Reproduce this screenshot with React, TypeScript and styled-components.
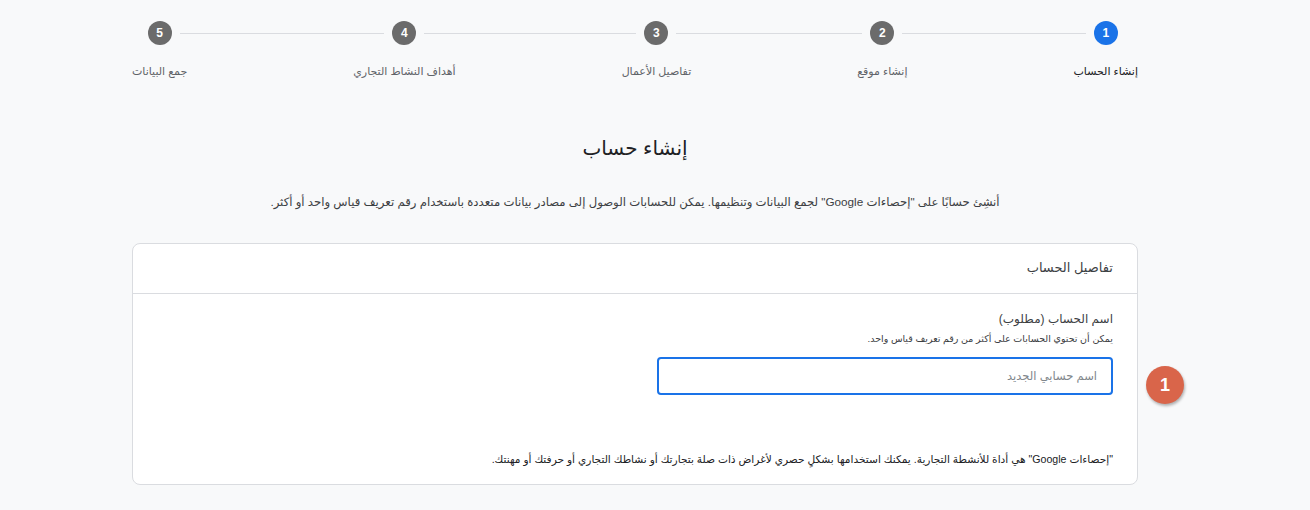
import { createGlobalStyle } from "styled-components";
import styled from "styled-components";

const GlobalStyle = createGlobalStyle`
  html, body {
    margin: 0;
    padding: 0;
    background: #f8f9fa;
  }

  body {
    font-family: "Liberation Sans", Arial, "DejaVu Sans", sans-serif;
    color: #202124;
  }
`;

const Page = styled.div`
  direction: rtl;
  min-height: 510px;
  padding: 21px 172px 0 132px;
  box-sizing: border-box;
  position: relative;
`;

const Stepper = styled.div`
  display: flex;
  align-items: flex-start;
`;

const Step = styled.div`
  display: flex;
  flex-direction: column;
  align-items: stretch;
`;

const StepTop = styled.div`
  display: flex;
  align-items: center;
  height: 24px;
`;

interface LineProps {
  $blank?: boolean;
}

const StepLine = styled.span<LineProps>`
  flex: 1;
  height: 1px;
  background: ${({ $blank }) => ($blank ? "transparent" : "#dadce0")};
`;

interface CircleProps {
  $active: boolean;
}

const StepCircle = styled.span<CircleProps>`
  width: 24px;
  height: 24px;
  margin: 0 8px;
  border-radius: 50%;
  flex-shrink: 0;
  display: flex;
  align-items: center;
  justify-content: center;
  background: ${({ $active }) => ($active ? "#1a73e8" : "#6b6b6b")};
  color: #fff;
  font-size: 12px;
  font-weight: 700;
`;

const StepLabel = styled.span<CircleProps>`
  margin-top: 18px;
  font-size: 11px;
  line-height: 16px;
  white-space: nowrap;
  text-align: center;
  color: ${({ $active }) => ($active ? "#202124" : "#5f6368")};
`;

const Connector = styled.span`
  flex: 1;
  height: 1px;
  margin-top: 12px;
  background: #dadce0;
`;

const Title = styled.h1`
  margin: 55px 0 0;
  text-align: center;
  font-size: 20px;
  font-weight: 400;
  line-height: 28px;
  color: #202124;
`;

const Description = styled.p`
  margin: 31px 0 0;
  text-align: center;
  font-size: 11.7px;
  line-height: 18px;
  color: #3c4043;
`;

const Card = styled.section`
  margin-top: 32px;
  background: #fff;
  border: 1px solid #dadce0;
  border-radius: 8px;
`;

const CardHeader = styled.div`
  height: 50px;
  padding: 0 24px 3px;
  box-sizing: border-box;
  display: flex;
  align-items: center;
  border-bottom: 1px solid #dadce0;
  font-size: 13px;
  color: #3c4043;
`;

const CardBody = styled.div`
  padding: 17px 24px 17px;
`;

const FieldLabel = styled.div`
  font-size: 12px;
  line-height: 16px;
  color: #3c4043;
`;

const FieldHint = styled.div`
  margin-top: 5px;
  font-size: 9.5px;
  line-height: 14px;
  color: #3c4043;
`;

const Input = styled.input`
  display: block;
  margin-top: 11px;
  width: 456px;
  height: 38px;
  box-sizing: border-box;
  padding: 0 14px;
  border: 2px solid #1a73e8;
  border-radius: 4px;
  font-family: inherit;
  font-size: 11.5px;
  color: #202124;
  outline: none;
  direction: rtl;

  &::placeholder {
    color: #80868b;
  }
`;

const Footnote = styled.p`
  margin: 56px 0 0;
  font-size: 10.6px;
  line-height: 16px;
  color: #202124;
`;

const Badge = styled.span`
  position: absolute;
  top: 366px;
  left: 1146px;
  width: 38px;
  height: 38px;
  border-radius: 50%;
  background: #d9654a;
  color: #fff;
  font-size: 18px;
  font-weight: 700;
  display: flex;
  align-items: center;
  justify-content: center;
  box-shadow: 1px 2px 3px rgba(0, 0, 0, 0.3);
`;

const steps = [
  "إنشاء الحساب",
  "إنشاء موقع",
  "تفاصيل الأعمال",
  "أهداف النشاط التجاري",
  "جمع البيانات",
];

export default function App() {
  return (
    <>
      <GlobalStyle />
      <Page>
        <Stepper>
          {steps.map((label, i) => (
            <StepGroup key={label} index={i} label={label} last={i === steps.length - 1} />
          ))}
        </Stepper>

        <Title>إنشاء حساب</Title>
        <Description>
          أنشِئ حسابًا على "إحصاءات Google" لجمع البيانات وتنظيمها. يمكن للحسابات الوصول إلى مصادر بيانات متعددة باستخدام رقم تعريف قياس واحد أو أكثر.
        </Description>

        <Card>
          <CardHeader>تفاصيل الحساب</CardHeader>
          <CardBody>
            <FieldLabel>اسم الحساب (مطلوب)</FieldLabel>
            <FieldHint>يمكن أن تحتوي الحسابات على أكثر من رقم تعريف قياس واحد.</FieldHint>
            <Input placeholder="اسم حسابي الجديد" />
            <Footnote>
              "إحصاءات Google" هي أداة للأنشطة التجارية. يمكنك استخدامها بشكلٍ حصري لأغراض ذات صلة بتجارتك أو نشاطك التجاري أو حرفتك أو مهنتك.
            </Footnote>
          </CardBody>
        </Card>

        <Badge>1</Badge>
      </Page>
    </>
  );
}

interface StepGroupProps {
  index: number;
  label: string;
  last: boolean;
}

const StepGroup = ({ index, label, last }: StepGroupProps) => {
  const active = index === 0;
  return (
    <>
      <Step>
        <StepTop>
          <StepLine $blank={index === 0} />
          <StepCircle $active={active}>{index + 1}</StepCircle>
          <StepLine $blank={last} />
        </StepTop>
        <StepLabel $active={active}>{label}</StepLabel>
      </Step>
      {!last && <Connector />}
    </>
  );
};
